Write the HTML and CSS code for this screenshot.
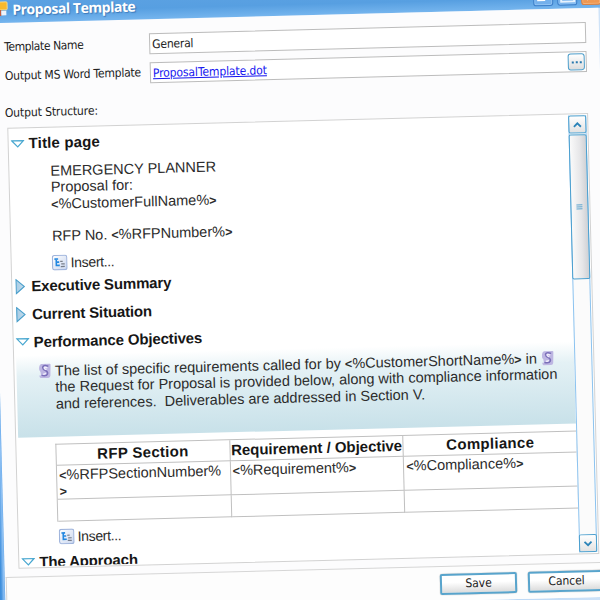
FILE: index.html
```html
<!DOCTYPE html>
<html lang="en">
<head>
<meta charset="utf-8">
<title>Proposal Template</title>
<link rel="stylesheet" href="styles.css">
</head>
<body>
<svg width="0" height="0" class="defs">
  <defs>
    <linearGradient id="gBox" x1="0" y1="0" x2="1" y2="1"><stop offset="0" stop-color="#fff"/><stop offset="1" stop-color="#c9d6ef"/></linearGradient>
    <linearGradient id="gTri" x1="0" y1="0" x2="1" y2="0"><stop offset="0" stop-color="#a9cde6"/><stop offset="1" stop-color="#c3dcec"/></linearGradient>
    <symbol id="open" viewBox="0 0 14 9"><path d="M1.2 1.2H12.8L7 7.4Z" fill="#fff" stroke="#48a7d0" stroke-width="1.2"/></symbol>
    <symbol id="closed" viewBox="0 0 10 16"><path d="M.8 1L9 8L.8 15Z" fill="url(#gTri)" stroke="#4a9fcb" stroke-width="1.1"/></symbol>
    <symbol id="insert" viewBox="0 0 16 16"><rect x=".8" y=".8" width="14.4" height="14.4" rx="2" fill="url(#gBox)" stroke="#9fb4dc" stroke-width="1.1"/><path d="M2.8 4.4H6.500M4.600 4V10.800H8M5 7.500H7.500" fill="none" stroke="#2388e0" stroke-width="1.600"/><path d="M8.500 6.800H11M9.500 9.400H13M9 12H13" stroke="#777d88" stroke-width="1.2"/></symbol>
    <symbol id="scroll" viewBox="0 0 13 16"><path d="M3 1H11.5Q12.5 1 12.2 3L11.8 13Q11.5 15 9.5 15H2Q.7 14.500.8 12.500H2.500L2 9Q.3 8 .7 5Q1 1.500 3 1Z" fill="#bdb6e2"/><path d="M10 3.300Q4.500 1.500 4.300 4.500Q4.500 6.500 7 7.500Q9.500 8.500 9 11Q8 13.500 3 12.300" fill="none" stroke="#7a6fb8" stroke-width="1.500"/><path d="M9 5Q6 3.600 5.800 5Q6 6 8 6.800M7 9.800Q7 11.400 4.500 11" fill="none" stroke="#f1eefc" stroke-width="1.300"/></symbol>
  </defs>
</svg>
<div class="window">
  <header class="titlebar">
    <svg class="app" width="17" height="16" viewBox="0 0 17 16"><rect x="1" y="1" width="9" height="12" fill="#dfeaf8"/><rect x="8" y="1" width="8" height="8" rx="1" fill="#f7b92c" stroke="#fbe29a" stroke-width=".8"/><rect x="3" y="9" width="7" height="6" fill="#c55c3c"/><rect x="10" y="10" width="5" height="4.500" fill="#edf2fa"/></svg>
    <h1>Proposal Template</h1>
    <div class="controls"><i class="min"></i><i class="max"></i><i class="close"><svg width="12" height="12" viewBox="0 0 12 12"><path d="M1.500 1.500L10.500 10.500M10.500 1.500L1.500 10.500" stroke="#fff" stroke-width="2.600"/></svg></i></div>
  </header>
  <main>
    <div class="field"><label class="l-name">Template Name</label><div class="input"><span class="value">General</span></div></div>
    <div class="field"><label class="l-out">Output MS Word Template</label><div class="input"><a class="link">ProposalTemplate.dot</a><b class="more"><i></i><i></i><i></i></b></div></div>
    <div class="caption">Output Structure:</div>
    <section class="pane">
      <div class="doc">
        <h2><svg class="open"><use href="#open"/></svg><span class="t-title">Title page</span></h2>
        <div class="text intro"><p>EMERGENCY PLANNER</p><p>Proposal for:</p><p><b>&lt;</b>%CustomerFullName%<b>&gt;</b></p><p>&nbsp;</p><p>RFP No. <b>&lt;</b>%RFPNumber%<b>&gt;</b></p></div>
        <div class="insert"><svg><use href="#insert"/></svg><span>Insert...</span></div>
        <h2 class="exec"><svg class="closed"><use href="#closed"/></svg><span>Executive Summary</span></h2>
        <h2 class="current"><svg class="closed"><use href="#closed"/></svg><span>Current Situation</span></h2>
        <h2 class="perf"><svg class="open"><use href="#open"/></svg><span>Performance Objectives</span></h2>
        <div class="note">
          <svg class="mark"><use href="#scroll"/></svg>
          <div class="text"><p class="first">The list of specific requirements called for by <b>&lt;</b>%CustomerShortName%<b>&gt;</b> in <svg class="mark end"><use href="#scroll"/></svg></p><p>the Request for Proposal is provided below, along with compliance information</p><p>and references.&nbsp; Deliverables are addressed in Section V.</p></div>
        </div>
        <div class="grid text">
          <div class="th wide">RFP Section</div><div class="th">Requirement / Objective</div><div class="th wide">Compliance</div>
          <div><b>&lt;</b>%RFPSectionNumber%<br><b>&gt;</b></div><div><b>&lt;</b>%Requirement%<b>&gt;</b></div><div><b>&lt;</b>%Compliance%<b>&gt;</b></div>
          <div></div><div></div><div></div>
        </div>
        <div class="insert second"><svg><use href="#insert"/></svg><span>Insert...</span></div>
        <h2 class="approach"><svg class="open"><use href="#open"/></svg><span>The Approach</span></h2>
      </div>
      <div class="scrollbar">
        <div class="arrow"><svg width="10" height="7" viewBox="0 0 10 7"><path d="M1.500 5.500L5 2L8.500 5.500" fill="none" stroke="#2b83b8" stroke-width="1.800"/></svg></div>
        <div class="thumb"><i></i><i></i><i></i></div>
        <div class="arrow down"><svg width="10" height="7" viewBox="0 0 10 7"><path d="M1.500 1.500L5 5L8.500 1.500" fill="none" stroke="#2b83b8" stroke-width="1.800"/></svg></div>
      </div>
    </section>
    <footer><div class="button">Save</div><div class="button">Cancel</div></footer>
  </main>
</div>
</body>
</html>
```
FILE: styles.css
```css
* { box-sizing: border-box; }
html, body { margin: 0; width: 600px; height: 600px; overflow: hidden; background: #fcfcfd; }
body { display: flow-root; }
.defs { position: absolute; }
h1, h2, p { margin: 0; font-weight: normal; }
svg { display: block; flex: none; }

/* The whole dialog is tilted around the page's top left corner. */
.window {
  width: 624px; height: 622px; margin: -6px 0 0 -22px;
  transform-origin: 22px 6px; transform: rotate(-1.46deg);
  background: linear-gradient(90deg, #3f8fdc 0 8px, #8fc1f4 11px, #5fa5ea 12px, #cfe3f8 620px);
  font-family: "DejaVu Sans Condensed", "DejaVu Sans", sans-serif; font-stretch: condensed;
  font-size: 12px; color: #222;
}
.titlebar {
  height: 29px; padding: 7px 0 0 21px; display: flex;
  background: linear-gradient(#a9cdf3 0, #5ba1e2 7px, #579fe1 18px, #75b5ee 29px);
}
.app { margin-top: 0; margin-left: -8px; }
h1 { font: bold 14px/17px "Open Sans", sans-serif; color: #fff; margin-left: 4px; letter-spacing: -.45px; text-shadow: 1px 1px 1px #3c78b8; white-space: nowrap; }
.controls { margin-left: auto; display: flex; gap: 4px; margin-right: 1px; }
.controls i { width: 20px; height: 20px; margin-top: -1px; border: 1px solid #3d7fc9; border-radius: 3px; background: #73b0ec; box-shadow: inset 0 0 0 1px #92c4f3; display: flex; align-items: center; justify-content: center; }
.controls .min::before { content: ""; width: 8px; height: 4px; background: #fff; margin: 6px 4px 0 0; }
.controls .max::before { content: ""; width: 11px; height: 10px; border: 2px solid #e7f2fd; }
.controls .close { background: #ee9853; border-color: #d98143; box-shadow: inset 0 0 0 1px #f5b47c; }

main { margin: 0 4px 0 12px; height: 589px; padding-top: 14px; background: #fcfcfd; }
.field { display: flex; align-items: center; height: 21px; margin: 0 0 8px 13px; }
label { width: 145px; white-space: nowrap; margin-top: -1px; }
.l-name { letter-spacing: -.4px; }
.l-out { letter-spacing: -.2px; }
.input { width: 437px; height: 21px; border: 1.5px solid #bcbcbc; background: #fff; display: flex; align-items: center; padding: 0 1px 0 2px; }
.value { letter-spacing: -.2px; }
.link { color: #1414f0; text-decoration: underline; letter-spacing: -.1px; }
.more { margin-left: auto; width: 17px; height: 17px; border: 1.5px solid #4b9cc9; border-radius: 3px; background: linear-gradient(#fff, #ddd); display: flex; align-items: center; justify-content: center; gap: 2px; }
.more i { width: 2px; height: 2px; background: #2878ae; }
.caption { margin: 18px 0 0 12px; height: 16px; line-height: 16px; letter-spacing: -.1px; }
.pane { margin: 7px 0 0 14px; width: 581px; height: 441px; border: 1px solid #d2d2d2; background: #fff; display: flex; }
.doc { width: 560px; height: 438px; overflow: hidden; padding-top: 5px; flex: none; }

h2 { height: 20px; display: flex; align-items: center; padding-left: 2px; font: bold 15px/20px "Liberation Sans", Arial, sans-serif; color: #161616; white-space: nowrap; letter-spacing: -.15px; }
h2 .open { width: 14px; height: 9px; margin-right: 4px; }
h2 .closed { width: 10px; height: 16px; margin: 0 6px 0 1px; }
.t-title { letter-spacing: .15px; }
.text { font: 14.5px/16.25px "Liberation Sans", Arial, sans-serif; white-space: nowrap; color: #2c2c2c; }
.text p { height: 16.25px; }
.text b { font-size: 12.5px; line-height: 1; }
.intro { margin: 10px 0 0 41px; }
.insert { margin: 10.75px 0 0 40px; height: 16px; display: flex; align-items: center; gap: 3px; font: 14px/16px "Liberation Sans", Arial, sans-serif; letter-spacing: -.35px; color: #2c2c2c; }
.insert svg { width: 16px; height: 16px; }
.exec { margin-top: 5px; }
.current { margin-top: 8px; }
.perf { margin-top: 7.500px; }
.note { margin: 3.500px 0 0 2px; height: 82px; padding: 8px 0 0 21.500px; display: flex; gap: 4px; background: linear-gradient(#fff, #e4f1f5 25%, #c8e1e9); }
.mark { width: 13px; height: 16px; }
.note > .mark { margin-top: 0; }
.mark.end { display: inline-block; vertical-align: -3px; margin-left: 0; }
.grid { width: 522px; margin: 6.500px 0 0 39px; display: grid; grid-template-columns: repeat(3, 173.700px); grid-template-rows: 21.300px 34.500px 21.500px; border: solid #c0c0c0; border-width: 1px 0 0 1px; line-height: 16px; }
.grid > div { border: solid #c0c0c0; border-width: 0 1px 1px 0; padding: 1px 0 0 2px; }
.grid > .th { font-weight: bold; font-size: 15px; text-align: center; padding: 2px 0 0; color: #161616; letter-spacing: -.03px; }
.grid > .wide { letter-spacing: .3px; }
.second { margin-top: 7.500px; }
.approach { margin-top: 6.500px; }

.scrollbar { width: 18px; margin-top: 1px; height: 437px; background: #fbfbfb; border: solid #8cc3f0; border-width: 0 1.500px; display: flex; flex-direction: column; }
.arrow { height: 18px; margin: 0 -1px; border: 1.500px solid #4b9fce; border-radius: 2px; background: linear-gradient(#fff, #e2e2e2); display: flex; align-items: center; justify-content: center; flex: none; }
.down { margin-top: auto; }
.thumb { margin: 1px -1px 0; height: 145px; border: 1.500px solid #4b9fce; border-radius: 2px; background: linear-gradient(90deg, #fafafa, #e6e6e8 60%, #cfd1d5); display: flex; flex-direction: column; align-items: center; justify-content: center; gap: 1px; }
.thumb i { width: 6px; height: 1.300px; background: #5ea5cf; }

footer { margin-top: 8px; height: 35px; border: solid #d6d6d6; border-width: 1px 0 0 1px; margin-left: 1px; padding: 7px 0 0 433px; display: flex; gap: 11px; background: #fdfdfd; }
.button { width: 77px; height: 21px; border: 2px solid #58a4cc; border-radius: 2px; background: linear-gradient(#fff 40%, #dcdcdc); text-align: center; line-height: 17px; letter-spacing: -.05px; box-shadow: 0 0 1px #8a8a8a; }
```
